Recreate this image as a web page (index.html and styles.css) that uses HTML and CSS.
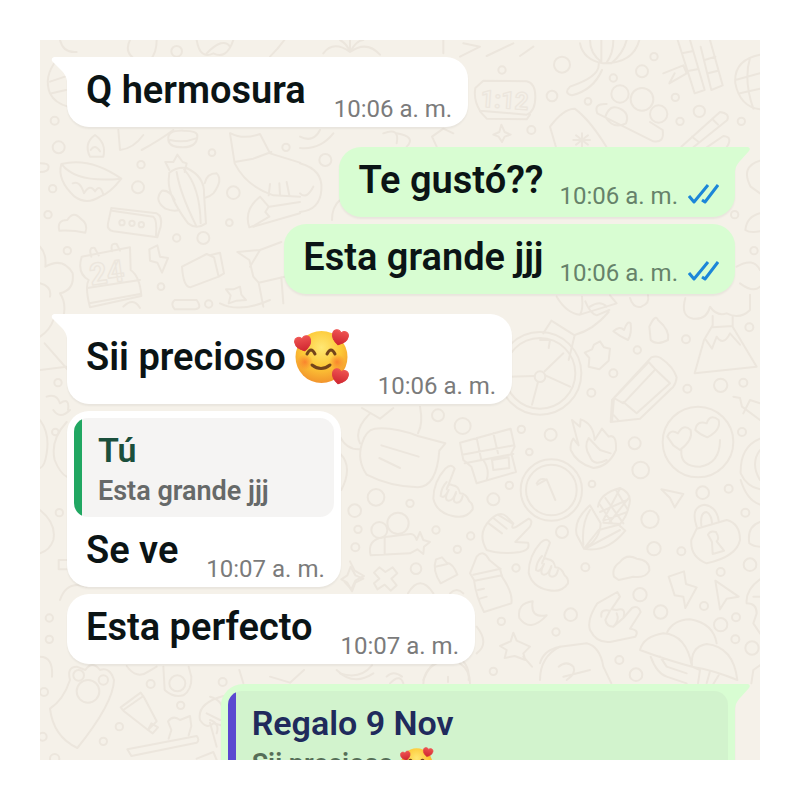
FILE: index.html
```
<!DOCTYPE html>
<html lang="es">

<head>
    <meta charset="utf-8">
    <meta name="viewport" content="width=device-width, initial-scale=1">
    <title>Chat</title>
    <link rel="stylesheet" href="styles.css">
</head>

<body>
    <!-- Shared drawings -->
    <svg class="defs" aria-hidden="true">
        <defs>
            <radialGradient id="face" cx="50%" cy="32%" r="68%">
                <stop offset="0" stop-color="#ffe874"/>
                <stop offset="0.55" stop-color="#fdc936"/>
                <stop offset="1" stop-color="#f2942c"/>
            </radialGradient>
            <radialGradient id="blush">
                <stop offset="0" stop-color="#f9702c" stop-opacity="0.75"/>
                <stop offset="1" stop-color="#f9702c" stop-opacity="0"/>
            </radialGradient>
            <linearGradient id="red" x1="0" y1="0" x2="0" y2="1">
                <stop offset="0" stop-color="#ee5351"/>
                <stop offset="1" stop-color="#cf2630"/>
            </linearGradient>
            <path id="heart" d="M0 8C-4 6-8 3-8-2C-8-7-2-8 0-4C2-8 8-7 8-2C8 3 4 6 0 8Z" stroke="url(#red)" stroke-width="1" stroke-linejoin="round"/>
            <symbol id="love" viewBox="0 0 56 56">
                <circle cx="27.500" cy="28" r="26" fill="url(#face)"/>
                <circle cx="11" cy="33" r="8" fill="url(#blush)"/>
                <circle cx="43" cy="33" r="8" fill="url(#blush)"/>
                <g fill="none" stroke="#74451b" stroke-width="3" stroke-linecap="round">
                    <path d="M13 25Q17 17 21 25"/>
                    <path d="M33 25Q37 17 41 25"/>
                    <path d="M18 36Q27 43 36 36"/>
                </g>
                <use href="#heart" fill="url(#red)" transform="translate(9 14) rotate(-12)"/>
                <use href="#heart" fill="url(#red)" transform="translate(46 8) rotate(14)"/>
                <use href="#heart" fill="url(#red)" transform="translate(46 47) rotate(14)"/>
            </symbol>
            <symbol id="ticks" viewBox="0 0 31 20">
                <path d="M1 12L6 18L20 1M14 16L17 18L30 1" fill="none" stroke="#1c86d8" stroke-width="3" stroke-linejoin="round"/>
            </symbol>
            <g id="hand">
                <path d="M40 10Q58 -8 68 10L44 72Q48 52 62 60Q80 62 84 84Q102 84 112 108Q124 116 122 132Q102 162 62 152Q14 142 4 100Q4 50 40 10Z"/>
                <path d="M44 50Q28 66 26 92Q38 102 50 74M50 74Q34 104 50 106Q64 106 72 80M72 84Q58 110 74 112Q88 112 92 92"/>
            </g>
        </defs>
    </svg>

    <main class="chat">
        <svg class="wallpaper" viewBox="0 0 2160 2160" preserveAspectRatio="xMidYMin slice" aria-hidden="true">
            <g>
                <path d="M60 0Q70 40 110 36M270 0Q250 40 290 60M350 0Q350 40 330 60M470 0Q480 60 520 40Q560 60 580 0M500 40Q550 -10 570 20M690 50Q720 20 740 -10"/>
                <path d="M50 60Q10 110 30 160Q45 190 85 200M30 125L75 110M35 160L78 150"/>
                <path d="M150 350Q130 310 165 285Q200 310 190 350ZM152 330Q165 310 180 334"/>
                <path d="M64 372Q150 350 244 416Q210 460 180 470Q140 496 104 470Q50 420 64 372ZM66 374Q110 430 244 416M98 430Q120 420 132 460Q150 430 165 454Q180 430 190 464"/>
                <path d="M235 270L240 330Q280 326 310 285M305 330Q360 300 400 270M385 300Q380 270 430 272Q475 272 472 290Q470 322 428 322Q388 322 385 300ZM390 300Q430 310 468 295"/>
                <path d="M388 390L376 366L400 366L412 344L428 366L440 370L434 396"/>
                <path d="M388 398Q410 380 440 384Q494 410 492 460L498 550Q470 570 444 550Q384 470 386 420ZM410 396Q420 460 468 556M432 388Q480 440 482 550M404 480Q390 450 366 452Q340 480 376 506Q400 516 418 510M494 430Q500 400 530 400Q550 420 520 460Q510 470 494 474"/>
                <path d="M58 572Q50 540 82 540Q100 510 122 536Q146 552 136 578Q100 570 58 572Z"/>
                <path d="M214 504L350 520Q368 528 362 560L352 592L220 574Q200 570 204 550ZM216 512L340 530Q352 540 348 586"/>
                <path d="M125 650L270 622L272 690Q300 710 304 768L150 802Q134 740 146 720Q110 700 125 650ZM154 650Q144 620 164 624L176 646M216 634Q210 606 230 612L240 632M142 744L300 720M148 790L300 762"/>
                <path d="M328 628L352 616L360 650L384 654L366 698L352 668L330 662Z"/>
                <path d="M426 680L500 642L522 652L536 710L450 742Q430 740 426 680ZM510 646L540 638L552 700L536 710"/>
                <path d="M570 280L584 370Q620 440 700 466L780 470M572 280Q610 300 660 282L690 340L780 368M584 366L640 356L694 336M686 466L690 432M720 464L718 430M748 466L740 426"/>
                <path d="M628 562Q610 510 660 470L686 500L676 516L688 530L640 558ZM688 500L780 486M640 560L780 520"/>
                <path d="M592 636L660 630L630 680M592 636L628 660L640 710L656 728L780 700M660 630L724 606M656 728L670 800M724 712L730 790"/>
                <path d="M600 740L604 764L618 780L590 782L566 790L572 766L558 748L580 748Z"/>
                <path d="M0 620Q20 640 16 680Q70 650 98 700Q104 750 60 760Q80 790 70 830M0 730Q36 740 30 770M0 370Q26 370 26 380Q26 396 0 396M404 780H470Q488 804 466 808H404Q390 792 404 780Z"/>
                <text x="154" y="736" transform="rotate(-8 154 736)">24</text>
            </g>
            <g transform="translate(780 0)">
                <path d="M70 40Q100 0 150 36Q200 0 240 44M150 36V-10M120 0Q140 10 150 36Q170 0 190 0M480 50L540 20L490 10M560 48L640 10M700 20L660 48M430 0V40"/>
                <path d="M550 122L680 124Q706 130 706 170Q706 214 680 224L540 212Q520 180 526 144ZM540 214L560 236L680 238L690 224"/>
                <text x="540" y="200" class="small" transform="rotate(4 540 200)">1:12</text>
                <path d="M604 254L614 276L632 284L614 290L606 306L596 290L580 284L598 276Z"/>
                <path d="M0 324Q60 330 100 280M0 290Q40 310 60 270M250 280Q300 260 290 310M290 280Q350 290 320 320M410 320L396 290L430 266L460 280M0 370Q70 390 64 450Q60 510 0 516M0 460Q20 480 40 440M96 540Q96 500 120 480"/>
            </g>
            <g transform="translate(1500 0)">
                <path d="M120 10Q130 60 190 70Q280 70 298 0M150 0Q150 40 184 66M184 0V66M220 0Q220 40 200 68M260 0Q250 40 214 70M176 72Q180 110 90 140Q70 160 96 166Q160 150 186 90"/>
                <path d="M413 0L464 160L494 150L450 0M426 40L456 34M440 94L472 88M370 100L430 76L440 100L388 130L404 100M482 20L514 150L548 136L510 0M494 60L526 50M504 100L534 92"/>
                <path d="M660 44Q580 60 586 130Q600 200 660 208M586 120L660 100M600 160L660 146M630 54Q610 120 640 206"/>
                <circle cx="240" cy="162" r="26"/><circle cx="306" cy="178" r="34"/><circle cx="356" cy="222" r="26"/>
                <path d="M200 192Q160 190 172 220L340 304Q374 310 368 270L330 246M196 230Q210 190 240 206Q270 220 258 250Q220 270 196 230"/>
                <path d="M48 322L30 260Q70 206 104 206Q150 240 200 322M126 280V320M100 300H150M108 286L144 314M144 286L108 314"/>
                <path d="M424 320L540 216Q570 220 562 240L460 322M456 290L476 306M520 240L534 254M500 322L550 288Q580 290 560 322"/>
                <path d="M660 362Q600 380 632 440L660 460M660 520Q620 530 616 570Q630 580 660 574M590 680Q640 650 660 690M600 730Q640 760 660 740"/>
            </g>
            <g transform="translate(0 780)">
                <path d="M0 110Q30 90 40 60M0 210L80 200M14 130L84 210M20 290Q50 280 60 310Q90 290 84 330M40 330Q60 360 90 330M250 20Q280 -10 300 24M540 10Q600 40 690 0"/>
            </g>
            <g transform="translate(0 1080)">
                <path d="M0 60Q30 100 20 160Q14 200 0 204M80 66Q30 120 44 180Q60 220 80 230M0 330Q50 370 40 420Q30 450 0 460M80 480H56V508H80M60 600Q80 540 140 560M0 770Q40 770 36 830"/>
                <path d="M932 500L946 526L970 536L946 548L936 574L922 548L904 538L922 526ZM900 160Q940 200 904 270M990 40Q940 90 960 130"/>
            </g>
            <g transform="translate(900 1020)">
                <path d="M66 84L120 116L160 84M240 80Q250 130 234 160M0 170Q20 210 60 208"/>
                <path d="M104 146Q160 140 234 168L316 190L298 212Q290 320 234 322Q150 320 80 284Q50 240 66 190Q78 150 104 146ZM124 196L236 230M118 234L180 264"/>
                <path d="M360 188L512 146L524 200L514 220L528 276L410 310L394 260L370 240ZM410 174L424 240M460 160L474 220M366 224L522 196M374 250L520 222M430 240Q450 270 440 300M456 240L506 232L508 264L460 270Z"/>
                <use href="#hand" transform="translate(276 256)"/>
                <use href="#hand" transform="translate(562 478)"/>
                <path d="M440 510Q410 460 450 420Q480 390 500 410L520 430Q510 450 530 440L566 416Q580 420 570 440L526 486L564 488Q572 510 540 516Q480 524 440 510ZM446 430L486 460M460 414L500 446M474 404L516 430"/>
                <circle cx="634" cy="330" r="92"/><circle cx="634" cy="330" r="76"/>
                <path d="M592 314L620 298L646 360M590 310Q600 290 620 300"/>
                <circle cx="600" cy="-20" r="124"/><circle cx="600" cy="-20" r="106"/><circle cx="600" cy="-10" r="16"/>
                <path d="M594 6L576 74M616 -14L690 20M614 -26L670 -80M584 -12L504 -10"/>
                <circle cx="118" cy="450" r="24"/><circle cx="174" cy="430" r="32"/>
                <path d="M92 526Q80 480 130 472L210 462Q224 460 230 480L240 456L250 480L270 486L252 500L250 522L232 508L210 520ZM134 474V522"/>
                <path d="M30 544L44 572L72 588L46 602L34 628L14 606M118 562L136 576L158 562L172 580L154 596L170 616L152 632L134 614L112 628L102 610L118 596L102 578ZM288 538L306 532L320 548Q340 550 352 584L302 610Q276 570 288 538ZM286 560L322 552"/>
                <path d="M398 560L410 530Q430 506 448 540L480 566L486 590Q520 640 514 670L432 696Q408 650 402 600L390 580ZM400 584L482 566M404 602L486 586M414 630L432 626M420 656L440 650"/>
                <path d="M578 664Q530 670 538 714Q570 760 620 706Q570 716 578 664ZM520 758L530 782L570 800L550 820L556 840L524 828L494 834L500 810L480 798L512 784ZM550 830L576 860"/>
                <path d="M204 640Q240 580 280 640M330 640Q350 620 370 640M410 740Q450 790 410 820M250 900Q270 850 300 838M350 830Q390 850 386 900M324 890V906M0 880Q60 900 96 856M140 890Q160 870 186 890M600 900Q600 830 660 800"/>
            </g>
            <g transform="translate(1500 750)">
                <path d="M50 20Q80 70 120 74Q130 60 126 20M120 74L230 40L210 16M136 34Q150 70 170 76L208 60M150 50Q180 30 200 50M106 134Q160 120 206 66M10 130L34 92L104 136L86 210M0 150L30 150L26 174"/>
                <path d="M270 24Q280 56 304 50Q330 40 324 16M220 124Q240 106 252 120Q262 90 272 100Q276 130 264 150Q240 140 220 124ZM328 110Q346 70 354 90Q390 120 384 150Q350 168 332 150Z"/>
                <path d="M180 154L192 172L210 176L206 212L178 238L146 230L148 204L134 188L156 178L162 164Z"/>
                <path d="M436 24Q420 80 460 86Q500 90 510 50Q530 80 560 70Q600 90 630 60L630 14M518 78V106L492 150L464 250L650 230L578 110V78M518 112L578 108M498 150L516 176L530 140Q550 170 570 130L600 164"/>
                <path d="M334 202Q350 196 362 204Q400 230 410 262Q408 280 400 290L300 386L212 396L216 330ZM326 216L222 324L250 340L346 238ZM346 238L390 280M390 280L290 370L250 336M222 324L216 396M222 376L236 392"/>
                <path d="M96 390L120 410L122 388Q160 400 164 450L186 416L206 440Q230 430 228 480Q206 530 160 534Q110 520 92 480Q90 460 100 446L116 466ZM150 500Q130 470 146 444L180 480L212 490M150 500Q160 530 200 510"/>
                <circle cx="474" cy="456" r="106"/>
                <path d="M400 466L382 440Q390 416 414 430Q430 400 452 420Q460 450 420 480ZM466 420Q470 390 500 400Q510 370 536 390Q544 420 502 442Q480 434 466 420ZM424 480Q420 530 480 530Q540 520 540 450"/>
                <path d="M580 320L600 324L606 350L660 390M610 370L630 330L660 340M660 446Q600 470 602 550Q620 590 660 598M660 480Q630 520 660 570"/>
            </g>
            <g transform="translate(1500 1320)">
                <path d="M174 80Q180 40 240 24Q280 40 266 80Q260 110 240 132L190 128M180 96L262 60M190 122L262 96M196 54L250 130M228 30L264 90M180 74L216 130M240 26L190 120M266 54L206 130"/>
                <path d="M150 76Q100 120 110 164L132 206Q180 180 182 130ZM132 206Q200 220 256 152L236 134L176 150ZM150 90Q124 130 130 194M240 150L136 206"/>
                <path d="M222 290Q214 264 240 246Q260 220 290 236Q330 240 328 272Q316 296 280 290L236 300ZM364 28L430 42L404 82L390 54ZM386 290L432 274L438 312L470 322L436 384L430 350L404 346ZM526 302L596 350L560 356L540 388Z"/>
                <path d="M470 140Q450 80 494 74Q530 80 536 122M484 136Q480 96 500 96Q514 104 516 128M470 146L560 120Q600 130 600 180Q590 230 500 250Q450 230 454 180ZM504 164Q510 150 528 156Q540 176 530 184L552 212L518 222L516 186Z"/>
                <path d="M232 336L172 370Q140 420 150 450Q170 490 210 486L286 470Q300 450 270 446L302 396Q296 374 276 384L250 414Q260 380 230 390L214 388L240 350ZM184 410Q180 386 210 392L196 420Q200 440 220 440Q240 420 230 400M250 414L220 440"/>
                <path d="M300 510Q310 470 370 460Q440 464 456 560Q380 540 300 510ZM382 456Q400 420 450 418Q520 430 530 490M456 560Q450 500 500 492Q580 500 592 600Q520 570 456 560M332 530Q350 580 380 590L440 610M360 530L380 560L440 580M456 560L480 570L474 610M510 574L500 610M536 586L520 612"/>
                <path d="M0 550Q10 510 60 500L140 490Q180 500 190 560L214 610M56 560Q80 540 100 560Q110 580 80 600M70 590L150 570"/>
                <path d="M602 0Q620 60 660 74M660 126Q620 140 628 190Q640 200 660 200M660 298Q616 330 620 370Q650 370 650 400L640 430L660 460M634 610L640 570L660 556M640 350H660"/>
            </g>
            <g transform="translate(0 1980)">
                <path d="M90 60Q80 20 110 20L136 30Q156 0 180 30Q210 20 222 60Q220 130 112 264Q40 230 30 146Q70 120 90 60Z" transform="translate(0 -120)"/>
                <circle cx="144" cy="-26" r="34"/><circle cx="116" cy="-74" r="16"/><circle cx="190" cy="-60" r="14"/>
            </g>
            <g transform="translate(0 1860)">
                <path d="M242 142L302 98L312 112L350 184L324 210L252 154ZM250 150L310 108M324 210L334 190L354 202L338 220ZM260 18Q290 60 326 34L350 20M370 20L374 90Q400 114 430 106Q456 90 454 50L446 20"/>
                <circle cx="412" cy="70" r="24"/>
                <path d="M262 268L470 228Q480 240 470 248L274 288ZM386 236L394 210L384 184Q400 164 420 180L450 168L454 198L446 226M550 108Q470 130 480 180Q500 210 520 190L560 200M500 160L540 180M510 188L530 260M470 296L520 276L530 300"/>
            </g>
            <g transform="translate(510 1890)">
                <path d="M100 40L88 0M180 20L240 38L282 0M380 0Q430 50 490 10M640 44Q640 0 680 -20M780 40Q780 0 750 -20M540 40Q570 10 580 40M0 80Q40 90 40 130M0 150Q30 160 20 190"/>
            </g>
            <!-- Loose bubbles between the doodles -->
            <g>
                <circle cx="56" cy="322" r="18"/><circle cx="44" cy="242" r="12"/><circle cx="38" cy="446" r="11"/><circle cx="24" cy="524" r="11"/>
                <circle cx="294" cy="442" r="18"/><circle cx="303" cy="374" r="11"/><circle cx="516" cy="338" r="10"/><circle cx="580" cy="458" r="19"/>
                <circle cx="568" cy="548" r="10"/><circle cx="490" cy="594" r="18"/><circle cx="410" cy="594" r="11"/><circle cx="82" cy="632" r="11"/>
                <circle cx="363" cy="740" r="10"/><circle cx="738" cy="322" r="11"/><circle cx="506" cy="792" r="11"/><circle cx="246" cy="548" r="8"/>
                <circle cx="276" cy="550" r="8"/><circle cx="304" cy="554" r="8"/><circle cx="410" cy="34" r="16"/><circle cx="1386" cy="90" r="11"/>
                <circle cx="1474" cy="270" r="12"/><circle cx="856" cy="360" r="18"/><circle cx="1566" cy="74" r="24"/><circle cx="1536" cy="168" r="16"/>
                <circle cx="1644" cy="184" r="10"/><circle cx="1806" cy="94" r="18"/><circle cx="1720" cy="114" r="11"/><circle cx="1842" cy="50" r="11"/>
                <circle cx="1906" cy="172" r="11"/><circle cx="1978" cy="214" r="17"/><circle cx="1920" cy="244" r="11"/><circle cx="2104" cy="244" r="11"/>
                <circle cx="2084" cy="524" r="11"/><circle cx="2142" cy="632" r="11"/><circle cx="54" cy="1028" r="11"/><circle cx="46" cy="1176" r="10"/>
                <circle cx="58" cy="1418" r="11"/><circle cx="28" cy="1734" r="11"/><circle cx="28" cy="1798" r="11"/><circle cx="1194" cy="1126" r="18"/>
                <circle cx="1268" cy="1158" r="24"/><circle cx="1444" cy="1168" r="11"/><circle cx="1532" cy="1184" r="18"/><circle cx="1468" cy="1236" r="10"/>
                <circle cx="1408" cy="1336" r="11"/><circle cx="1360" cy="1378" r="18"/><circle cx="1008" cy="1372" r="25"/><circle cx="944" cy="1412" r="19"/>
                <circle cx="1110" cy="1390" r="11"/><circle cx="954" cy="1468" r="11"/><circle cx="946" cy="1522" r="12"/><circle cx="1188" cy="1470" r="11"/>
                <circle cx="1292" cy="1488" r="11"/><circle cx="1252" cy="1528" r="11"/><circle cx="1128" cy="1586" r="16"/><circle cx="1428" cy="1584" r="11"/>
                <circle cx="1384" cy="1744" r="11"/><circle cx="1548" cy="1776" r="11"/><circle cx="1360" cy="1894" r="11"/><circle cx="1792" cy="930" r="11"/>
                <circle cx="1938" cy="898" r="12"/><circle cx="1720" cy="1000" r="12"/><circle cx="1654" cy="1058" r="12"/><circle cx="1942" cy="1046" r="12"/>
                <circle cx="2042" cy="1036" r="20"/><circle cx="2110" cy="1028" r="12"/><circle cx="2128" cy="862" r="12"/><circle cx="1784" cy="1210" r="18"/>
                <circle cx="1802" cy="1290" r="25"/><circle cx="2106" cy="1176" r="12"/><circle cx="1656" cy="1332" r="10"/><circle cx="1830" cy="1438" r="26"/>
                <circle cx="1566" cy="1476" r="18"/><circle cx="1842" cy="1526" r="20"/><circle cx="1924" cy="1534" r="12"/><circle cx="1636" cy="1582" r="12"/>
                <circle cx="1988" cy="1358" r="19"/><circle cx="2066" cy="1346" r="12"/><circle cx="2116" cy="1418" r="12"/><circle cx="2130" cy="1574" r="19"/>
                <circle cx="2042" cy="1596" r="12"/><circle cx="1800" cy="1664" r="20"/><circle cx="1592" cy="1724" r="19"/><circle cx="1862" cy="1716" r="20"/>
                <circle cx="1992" cy="1698" r="12"/><circle cx="2042" cy="1754" r="20"/><circle cx="2088" cy="1732" r="12"/><circle cx="2086" cy="1798" r="12"/>
                <circle cx="2136" cy="1824" r="20"/><circle cx="1738" cy="1860" r="12"/><circle cx="1788" cy="1904" r="19"/>
                <circle cx="12" cy="1956" r="12"/><circle cx="332" cy="1932" r="12"/><circle cx="548" cy="1926" r="12"/><circle cx="422" cy="1996" r="11"/>
                <circle cx="238" cy="2060" r="11"/><circle cx="190" cy="2104" r="11"/><circle cx="8" cy="2090" r="12"/><circle cx="44" cy="2156" r="14"/>
            </g>
        </svg>

        <ol class="messages">
            <li class="message received tail">
                <div class="line">
                    <p class="text">Q hermosura</p>
                    <time class="time" datetime="10:06">10:06 a. m.</time>
                </div>
            </li>
            <li class="message sent tail">
                <div class="line">
                    <p class="text">Te gustó??</p>
                    <time class="time" datetime="10:06">10:06 a. m.</time>
                    <svg class="ticks" role="img" aria-label="Leído"><use href="#ticks"/></svg>
                </div>
            </li>
            <li class="message sent">
                <div class="line">
                    <p class="text">Esta grande jjj</p>
                    <time class="time" datetime="10:06">10:06 a. m.</time>
                    <svg class="ticks" role="img" aria-label="Leído"><use href="#ticks"/></svg>
                </div>
            </li>
            <li class="message received tail">
                <div class="line">
                    <p class="text">Sii precioso <svg class="emoji" role="img" aria-label="🥰"><use href="#love"/></svg></p>
                    <time class="time" datetime="10:06">10:06 a. m.</time>
                </div>
            </li>
            <li class="message received">
                <blockquote class="quote">
                    <p class="author">Tú</p>
                    <p class="quoted">Esta grande jjj</p>
                </blockquote>
                <div class="line">
                    <p class="text">Se ve</p>
                    <time class="time" datetime="10:07">10:07 a. m.</time>
                </div>
            </li>
            <li class="message received">
                <div class="line">
                    <p class="text">Esta perfecto</p>
                    <time class="time" datetime="10:07">10:07 a. m.</time>
                </div>
            </li>
            <li class="message sent tail wide">
                <blockquote class="quote group">
                    <p class="author">Regalo 9 Nov</p>
                    <p class="quoted">Sii precioso <svg class="emoji" role="img" aria-label="🥰"><use href="#love"/></svg></p>
                </blockquote>
            </li>
        </ol>
    </main>
</body>

</html>
```
FILE: styles.css
```
* {
    box-sizing: border-box;
}

body {
    margin: 0;
    padding: 40px;
    height: 100vh;
    background-color: #ffffff;
    font-family: Roboto, "Liberation Sans", sans-serif;
}

p,
blockquote {
    margin: 0;
}

.defs {
    position: absolute;
    width: 0;
    height: 0;
}

.chat {
    position: relative;
    height: 100%;
    overflow: hidden;
    background-color: #f5f1e9;
}

.wallpaper {
    position: absolute;
    inset: 0;
    width: 100%;
    height: 100%;
    fill: none;
    stroke: #ece6dd;
    stroke-width: 6px;
    stroke-linejoin: round;
    stroke-linecap: round;
}

.wallpaper text {
    font-size: 90px;
    font-weight: 700;
    stroke-width: 4px;
}

.wallpaper .small {
    font-size: 72px;
}

.messages {
    position: relative;
    display: flex;
    flex-direction: column;
    gap: 7px;
    margin: 0;
    padding: 17px 25px 0 27px;
    list-style: none;
}

.message {
    position: relative;
    border-radius: 22px;
    box-shadow: 0 2px 2px rgba(0, 0, 0, 0.05);
}

.received {
    align-self: flex-start;
    background-color: #ffffff;
}

.sent {
    align-self: flex-end;
    background-color: #d8fdd2;
}

.message.tail:not(:first-child) {
    margin-top: 13px;
}

.received.tail {
    border-top-left-radius: 0;
}

.sent.tail {
    border-top-right-radius: 0;
}

.tail::before {
    content: "";
    position: absolute;
    top: 0;
    width: 16px;
    height: 24px;
}

.received.tail::before {
    right: 100%;
    background-color: #ffffff;
    clip-path: path("M3 0H16V24Q15 18 11 14L1 4Q0 1 3 0Z");
}

.sent.tail::before {
    left: 100%;
    background-color: #d8fdd2;
    clip-path: path("M13 0H0V24Q1 18 5 14L14 4Q16 1 13 0Z");
}

.wide {
    width: 77%;
}

.line {
    display: flex;
    align-items: flex-end;
    gap: 28px;
    padding: 10px 16px 4px 19px;
}

.sent .line {
    gap: 16px;
    padding-bottom: 7px;
}

.text {
    display: flex;
    align-items: center;
    gap: 8px;
    margin-bottom: 10px;
    color: #0b1415;
    font-size: 38px;
    font-weight: 600;
    line-height: 46px;
}

.sent .text {
    margin-bottom: 7px;
}

.time {
    margin-left: auto;
    color: #7b7b7b;
    font-size: 24px;
    line-height: 28px;
}

.sent .time {
    color: #66826a;
}

.ticks {
    width: 31px;
    height: 20px;
    margin: 0 0 6px -6px;
}

.emoji {
    width: 56px;
    height: 56px;
    margin: 5px 0;
}

.quote {
    margin: 0 7px;
    padding: 10px 16px 7px 24px;
    border-radius: 14px;
    background: linear-gradient(to right, #21a762 8px, #f5f4f3 8px);
}

.message:has(.quote) {
    padding-top: 7px;
}

.author {
    color: #1b4f3c;
    font-size: 34px;
    font-weight: 600;
    line-height: 44px;
}

.quoted {
    display: flex;
    align-items: center;
    gap: 6px;
    color: #666969;
    font-size: 27px;
    font-weight: 600;
    line-height: 38px;
}

.quoted .emoji {
    width: 34px;
    height: 34px;
    margin: 0;
}

.group {
    background: linear-gradient(to right, #5b48d0 8px, #d2f3cd 8px);
}

.group .author {
    color: #202a5c;
}

.group .quoted {
    color: #566e58;
}
```
